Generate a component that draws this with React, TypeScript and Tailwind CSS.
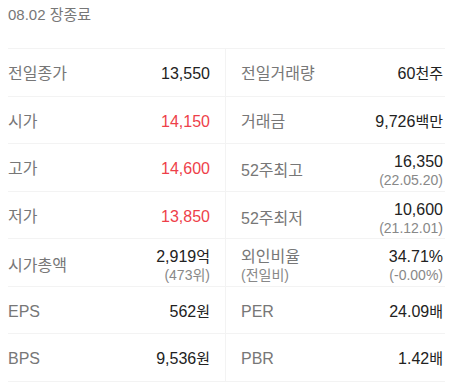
type Cell = {
  label: string;
  sub?: string;
  value: string;
  unit?: string;
  note?: string;
  red?: boolean;
};

const rows: [Cell, Cell][] = [
  [
    { label: "전일종가", value: "13,550" },
    { label: "전일거래량", value: "60", unit: "천주" },
  ],
  [
    { label: "시가", value: "14,150", red: true },
    { label: "거래금", value: "9,726", unit: "백만" },
  ],
  [
    { label: "고가", value: "14,600", red: true },
    { label: "52주최고", value: "16,350", note: "(22.05.20)" },
  ],
  [
    { label: "저가", value: "13,850", red: true },
    { label: "52주최저", value: "10,600", note: "(21.12.01)" },
  ],
  [
    { label: "시가총액", value: "2,919", unit: "억", note: "(473위)" },
    { label: "외인비율", sub: "(전일비)", value: "34.71%", note: "(-0.00%)" },
  ],
  [
    { label: "EPS", value: "562", unit: "원" },
    { label: "PER", value: "24.09", unit: "배" },
  ],
  [
    { label: "BPS", value: "9,536", unit: "원" },
    { label: "PBR", value: "1.42", unit: "배" },
  ],
];

function StatCell({ cell, right }: { cell: Cell; right?: boolean }) {
  const twoLine = !!(cell.note || cell.sub);
  return (
    <div
      className={
        "flex h-[47.5px] justify-between border-b border-[#f3f3f3] " +
        (twoLine ? "items-center pt-[7px] " : "items-center pt-[3px] ") +
        (right ? "pl-[15px] pr-[2px]" : "pr-[15px] border-r")
      }
    >
      <div className="flex flex-col">
        <span className="text-[16px] leading-[19px] text-[#777]">{cell.label}</span>
        {cell.sub && <span className="text-[14px] leading-[18px] text-[#888]">{cell.sub}</span>}
      </div>
      <div className="flex flex-col items-end">
        <span
          className={
            "text-[16px] leading-[19px] " + (cell.red ? "text-[#ee3f4a]" : "text-[#222]")
          }
        >
          {cell.value}
          {cell.unit && <span className="text-[15px]">{cell.unit}</span>}
        </span>
        {cell.note && <span className="text-[14px] leading-[18px] text-[#888]">{cell.note}</span>}
      </div>
    </div>
  );
}

export default function App() {
  return (
    <div
      className="w-[450px] h-[384px] overflow-hidden bg-white"
      style={{ fontFamily: '"Liberation Sans", "Noto Sans CJK KR", sans-serif' }}
    >
      {/* 상단 날짜 */}
      <div className="h-[48px] pl-2 pt-[5px] text-[15px] leading-[20px] text-[#777]">
        08.02 장종료
      </div>

      {/* 시세 표 */}
      <div className="ml-2 mr-[5px] grid grid-cols-[218px_1fr] border-t border-[#f3f3f3]">
        {rows.map(([l, r], i) => (
          <div key={i} className="contents">
            <StatCell cell={l} />
            <StatCell cell={r} right />
          </div>
        ))}
      </div>
    </div>
  );
}
